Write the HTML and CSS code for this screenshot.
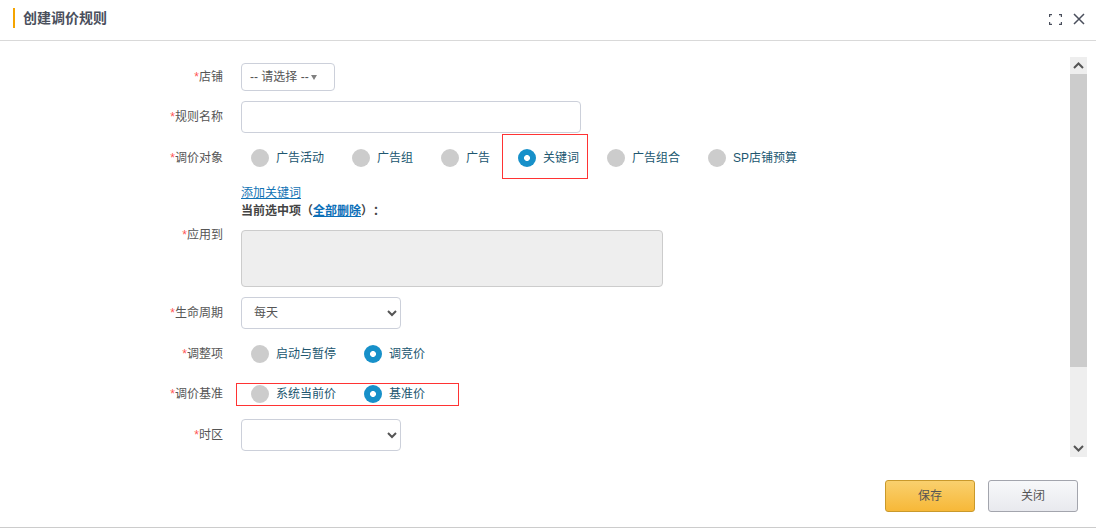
FILE: index.html
```html
<!DOCTYPE html>
<html lang="zh-CN">
<head>
<meta charset="utf-8">
<title>创建调价规则</title>
<link rel="stylesheet" href="styles.css">
</head>
<body>
<div class="dialog">
  <header class="head">
    <h1 class="title">创建调价规则</h1>
    <div class="tools">
      <svg class="icon-max" width="13" height="11" viewBox="0 0 13 11" fill="none" stroke="#4a4f5c" stroke-width="1.2"><path d="M.6 3V.6H3M10 .6h2.400V3M.6 8v2.400H3M10 10.400h2.400V8"/></svg>
      <svg class="icon-close" width="12" height="12" viewBox="0 0 12 12" fill="none" stroke="#4a4f5c" stroke-width="1.5"><path d="M1 1l10 10M11 1L1 11"/></svg>
    </div>
  </header>
  <main class="body">
    <form class="form">
      <div class="row r-shop">
        <label class="label"><i>*</i>店铺</label>
        <div class="fake-select">-- 请选择 -- <span class="caret"></span></div>
      </div>
      <div class="row r-name">
        <label class="label"><i>*</i>规则名称</label>
        <input class="input" type="text">
      </div>
      <div class="row r-radio r-target">
        <label class="label"><i>*</i>调价对象</label>
        <div class="radios">
          <span class="opt"><b class="radio"></b>广告活动</span>
          <span class="opt"><b class="radio"></b>广告组</span>
          <span class="opt"><b class="radio"></b>广告</span>
          <span class="opt marked"><b class="radio on"></b>关键词</span>
          <span class="opt"><b class="radio"></b>广告组合</span>
          <span class="opt"><b class="radio"></b>SP店铺预算</span>
        </div>
      </div>
      <div class="extra">
        <a class="add" href="#">添加关键词</a>
        <div class="current">当前选中项（<a href="#">全部删除</a>）：</div>
      </div>
      <div class="row r-apply">
        <label class="label"><i>*</i>应用到</label>
        <div class="applied"></div>
      </div>
      <div class="row r-cycle">
        <label class="label"><i>*</i>生命周期</label>
        <select class="select"><option>每天</option></select>
      </div>
      <div class="row r-radio r-item">
        <label class="label"><i>*</i>调整项</label>
        <div class="radios">
          <span class="opt"><b class="radio"></b>启动与暂停</span>
          <span class="opt"><b class="radio on"></b>调竞价</span>
        </div>
      </div>
      <div class="row r-radio r-base">
        <label class="label"><i>*</i>调价基准</label>
        <div class="radios boxed">
          <span class="opt"><b class="radio"></b>系统当前价</span>
          <span class="opt"><b class="radio on"></b>基准价</span>
        </div>
      </div>
      <div class="row r-zone">
        <label class="label"><i>*</i>时区</label>
        <select class="select"><option></option></select>
      </div>
    </form>
    <div class="scrollbar">
      <span class="sb-btn"><svg width="11" height="7" viewBox="0 0 11 7" fill="none" stroke="#555" stroke-width="2"><path d="M1 6l4.500-4.500L10 6"/></svg></span>
      <span class="sb-thumb"></span>
      <span class="sb-track"></span>
      <span class="sb-btn"><svg width="11" height="7" viewBox="0 0 11 7" fill="none" stroke="#555" stroke-width="2"><path d="M1 1l4.500 4.500L10 1"/></svg></span>
    </div>
  </main>
  <footer class="foot">
    <button class="btn save" type="button">保存</button>
    <button class="btn close" type="button">关闭</button>
  </footer>
</div>
</body>
</html>
```
FILE: styles.css
```css
*, *::after { box-sizing: border-box; }
html, body { margin: 0; padding: 0; background: #fff; }
body { font: 12px/18px "Liberation Sans", "Noto Sans CJK SC", sans-serif; color: #555; overflow: hidden; }
.dialog { width: 1096px; height: 528px; display: flex; flex-direction: column; border-bottom: 1px solid #ccc; }

.head { height: 41px; flex: none; border-bottom: 1px solid #d9d9d9; display: flex; align-items: flex-start; justify-content: space-between; padding: 0 11px 0 13px; }
.title { margin: 8px 0 0; font-size: 14px; font-weight: 700; line-height: 20px; color: #4a4f5c; border-left: 2px solid #f5a400; padding-left: 8px; }
.tools { display: flex; align-items: center; gap: 11px; margin-top: 13px; }

.body { flex: 1; min-height: 0; display: flex; align-items: flex-start; padding: 16px 9px 0 0; }
.form { flex: 1; height: 400px; padding-top: 6px; }
.row { display: flex; align-items: center; }
.label { width: 223px; flex: none; margin-right: 18px; text-align: right; line-height: 18px; color: #555; }
.label i { font-style: normal; color: #f55; }

.r-name { margin-top: 10px; }
.r-target { margin-top: 9px; }
.r-apply { margin-top: 10px; align-items: flex-start; }
.r-apply .label { line-height: 10px; }
.r-cycle { margin-top: 10px; }
.r-item { margin-top: 9px; }
.r-base { margin-top: 8px; }
.r-zone { margin-top: 9px; }

.fake-select { width: 94px; height: 28px; border: 1px solid #ccd0da; border-radius: 4px; padding-left: 8px; line-height: 26px; color: #555; }
.caret { display: inline-block; width: 0; height: 0; margin-left: -1px; border: 3px solid transparent; border-top: 5px solid #808080; border-bottom: 0; vertical-align: 1px; }
.input { width: 340px; height: 32px; border: 1px solid #ccd0da; border-radius: 4px; background: #fff; }
.select { width: 160px; height: 32px; border: 1px solid #ccd0da; border-radius: 4px; background: #fff; padding: 0 8px; font: inherit; color: #555; }

.radios { height: 32px; display: flex; align-items: center; gap: 28px; padding-left: 10px; }
.opt { position: relative; display: flex; align-items: center; color: #20566f; white-space: nowrap; }
.radio { width: 18px; height: 18px; flex: none; margin-right: 7px; border-radius: 50%; background: #ccc; }
.radio.on { background: radial-gradient(circle, #fff 0 2.6px, #1790c9 3.3px); }
.marked::after { content: ""; position: absolute; left: -16px; top: -15px; width: 86px; height: 45px; border: 1px solid #f33; }
.boxed { position: relative; }
.boxed::after { content: ""; position: absolute; left: -5px; top: 5px; width: 223px; height: 23px; border: 1px solid #f33; }

.extra { padding-left: 241px; margin-top: 10px; }
.add { display: block; height: 18px; color: #1273b5; }
.current { height: 18px; font-weight: 700; color: #444; text-spacing-trim: space-all; font-kerning: none; }
.current a { color: #0b6fb8; }
.applied { width: 422px; height: 57px; background: #eee; border: 1px solid #ccc; border-radius: 4px; }

.scrollbar { width: 17px; height: 400px; flex: none; display: flex; flex-direction: column; background: #eee; }
.sb-btn { height: 17px; flex: none; display: flex; align-items: center; justify-content: center; }
.sb-thumb { height: 293px; background: #ccc; flex: none; }
.sb-track { flex: 1; }

.foot { height: 70px; flex: none; display: flex; justify-content: flex-end; gap: 13px; padding: 23px 18px 0 0; }
.btn { width: 90px; height: 32px; border-radius: 3px; font: inherit; color: #555; padding: 0; }
.save { border: 1px solid #c9992b; background: linear-gradient(#f9d06e, #f7b838); }
.close { border: 1px solid #a3a5ad; background: linear-gradient(#f7f8fa, #e8e9ee); }
```
